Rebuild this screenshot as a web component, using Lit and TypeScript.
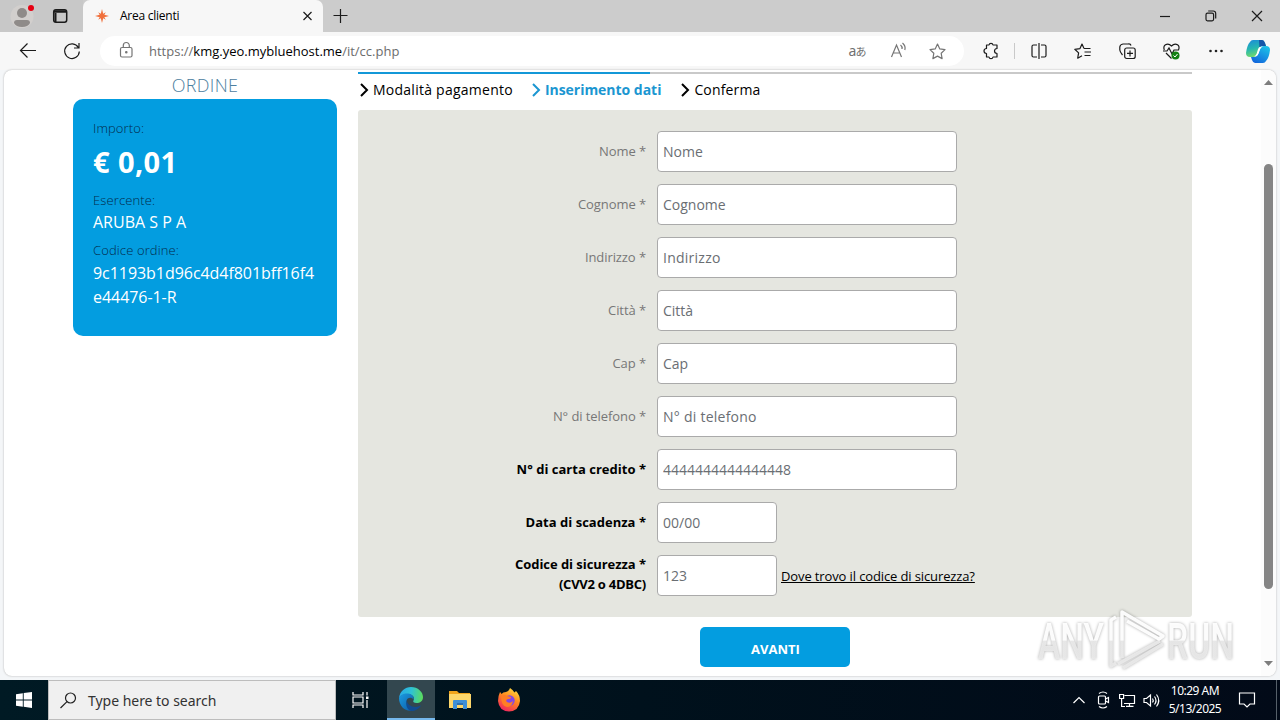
import { LitElement, html, css, svg } from "lit";
import { customElement, property } from "lit/decorators.js";

@customElement("browser-chrome")
class BrowserChrome extends LitElement {
  static styles = css`
    :host { display: block; font-family: "Open Sans", "Noto Sans", sans-serif; color: #000; }
    svg { display: block; fill: none; stroke: #1b1b1b; stroke-width: 1.2; flex: none; overflow: visible; }
    .titlebar { display: flex; height: 32px; background: #ccc; }
    .left { display: flex; width: 83px; align-items: center; background: #c8c8c8; border-radius: 0 0 5px 0; box-sizing: border-box; padding-left: 10px; gap: 15px; }
    .tab { display: flex; align-items: center; width: 240px; background: #f7f7f7; border-radius: 7px 7px 0 0; box-sizing: border-box; padding: 0 10px 0 12px; }
    .tab-title { margin-left: 11px; font-size: 12px; letter-spacing: -0.25px; flex: 1; line-height: 32px; white-space: nowrap; }
    .plus { margin: 9px 0 0 10px; }
    .controls { display: flex; margin-left: auto; align-items: center; gap: 34px; padding-right: 17px; }
    .toolbar { display: flex; height: 38px; background: #f7f7f7; align-items: center; }
    .nav { display: flex; gap: 27px; padding-left: 20px; width: 80px; box-sizing: border-box; }
    .address { display: flex; align-items: center; margin-left: 20px; width: 864px; height: 30px; border-radius: 15px; background: #fff; box-sizing: border-box; padding: 0 18px; }
    .url { margin-left: 14px; font-size: 13px; letter-spacing: 0; color: #6c6c6c; flex: 1; white-space: nowrap; }
    .host { color: #000; }
    .aa { font: 14px "Noto Sans", "Noto Sans CJK JP", sans-serif; color: #707070; width: 22px; letter-spacing: -0.8px; white-space: nowrap; margin-top: -2px; }
    .small { font-size: 11px; }
    .gray { stroke: #757575; }
    .tools { display: flex; flex: 1; align-items: center; padding: 0 10px 0 19px; gap: 27.500px; }
    .sep { width: 1px; height: 16px; background: #c9c9c9; margin: 0 -12px; flex: none; }
    .copilot { margin-left: -5px; }
  `;
  render() {
    return html`
      <div class="titlebar">
        <div class="left">
          <svg width="25" height="26" viewBox="0 0 25 26" stroke="none">
            <circle cx="12" cy="13.500" r="11.500" fill="#d2cfcd" stroke="none"/>
            <circle cx="12" cy="10" r="5" fill="#8f8b89" stroke="none"/>
            <path d="M4 20q0-3 3-3h10q3 0 3 3q-2 4-8 4t-8-4z" fill="#8f8b89" stroke="none"/>
            <circle cx="21" cy="5" r="3" fill="#e60012" stroke="none"/>
          </svg>
          <svg width="20" height="16" viewBox="0 0 20 16"><rect x="3.700" y="1.700" width="13" height="12.600" rx="2.200" stroke-width="1.500"/><path d="M4 3.500h12.500" stroke-width="2.500"/><path d="M5.500 5v9" stroke-width="2"/></svg>
        </div>
        <div class="tab">
          <svg width="14" height="14" viewBox="0 0 14 14"><path d="M7 0L8.200 4.700 10.800 3.200 9.300 5.800 14 7 9.300 8.200l1.500 2.600-2.600-1.500L7 14 5.800 9.300l-2.600 1.500 1.500-2.600L0 7l4.700-1.200-1.500-2.600 2.600 1.500z" fill="#f0703c" stroke="none"/></svg>
          <span class="tab-title">Area clienti</span>
          <svg width="11" height="10" viewBox="0 0 11 10"><path d="M1.500 1l8 8M9.500 1l-8 8"/></svg>
        </div>
        <svg class="plus" width="14" height="14" viewBox="0 0 14 14"><path d="M7.500 0v14M.5 6.500h14"/></svg>
        <div class="controls">
          <svg width="12" height="12" viewBox="0 0 12 12"><path d="M1 6.500h10"/></svg>
          <svg width="12" height="12" viewBox="0 0 12 12"><rect x="1" y="3.200" width="7.600" height="7.600" rx="1.500"/><path d="M3.200 1h5q2.500 0 2.500 2.500v5"/></svg>
          <svg width="12" height="12" viewBox="0 0 12 12"><path d="M1 1l10 10M11 1L1 11"/></svg>
        </div>
      </div>
      <div class="toolbar">
        <div class="nav">
          <svg width="16" height="16" viewBox="0 0 16 16"><path d="M16 7.500H.7M7.500 .5L.5 7.500l7 7"/></svg>
          <svg width="18" height="16" viewBox="0 0 18 16"><path d="M15.300 4.500A7.300 7.300 0 1 0 16.300 8.500M16 0v5h-5"/></svg>
        </div>
        <div class="address">
          <svg class="gray" width="17" height="16" viewBox="0 0 17 16"><rect x="2.500" y="4.500" width="11.500" height="9.500" rx="1.500"/><path d="M5.300 4.500V2.500a3 3 0 0 1 6 0v2"/><circle cx="8.300" cy="9.300" r=".7" fill="#757575"/></svg>
          <span class="url">https://<span class="host">kmg.yeo.mybluehost.me</span>/it/cc.php</span>
          <span class="aa">a<span class="small">あ</span></span>
          <svg class="gray" width="58" height="18" viewBox="0 0 58 18">
            <path d="M20.500 15L25.500 3l5 12M22.200 11h6.600M29.500 3q2 1.500 1.500 4M31.500 1q3.500 3 2.300 7"/>
          </svg>
          <svg class="gray" width="17" height="17" viewBox="0 0 17 17"><path stroke-linejoin="round" d="M8.500 1l2.300 4.900 5.200.7-3.800 3.700.9 5.300-4.600-2.500-4.600 2.500.9-5.300L1 6.600l5.200-.7z"/></svg>
        </div>
        <div class="tools">
          <svg width="16" height="16" viewBox="0 0 16 16"><path stroke-linejoin="round" d="M3.500 2H6Q6.300 .3 8 .3T10 2h4v3.500q-2.500 .3-2.500 2.500t2.500 2.500V14h-4q-.3 1.700-2 1.700T6 14H3.500v-3.500Q1 10.300 1 8t2.500-2.500z"/></svg>
          <span class="sep"></span>
          <svg width="16" height="16" viewBox="0 0 16 16"><path d="M6 2H2.500Q1 2 1 3.500v9Q1 14 2.500 14H6M10 2h3.500Q15 2 15 3.500v9q0 1.500-1.500 1.500H10M8 0v16"/></svg>
          <svg width="17" height="16" viewBox="0 0 17 16"><path stroke-linejoin="round" d="M10 5.500L8 1 6 5.600.8 6.300l3.800 3.600-.9 5.300L8 12.800M10 5.500h6.500M10.500 9H17M10.500 12.500h6"/></svg>
          <svg width="17" height="17" viewBox="0 0 17 17"><rect x="5.700" y="5" width="10.500" height="10.500" rx="2"/><path d="M11 7.500v6M8 10.300h6M3.500 12Q1 9 .8 7V4Q1 1.500 4 1h5q2.500-.5 3 1.500"/></svg>
          <svg width="17" height="17" viewBox="0 0 17 17"><path d="M1.300 7Q0 3.500 2.500 1.800 5.500 0 8.500 3 11.500 0 14.500 1.800 17 3.500 15.500 7M0 8h4l2-3 3 6 2-4h5M3 10l5.500 5.500"/><circle cx="12.500" cy="12.500" r="4" fill="#148014" stroke="none"/><path d="M10.500 12.500l1.500 1.500 2.500-3" stroke="#fff" stroke-width="1"/></svg>
          <svg width="16" height="4" viewBox="0 0 16 4"><g fill="#222" stroke="none"><circle cx="2.500" cy="2" r="1.300"/><circle cx="8" cy="2" r="1.300"/><circle cx="13.500" cy="2" r="1.300"/></g></svg>
          <svg class="copilot" width="24" height="23" viewBox="0 0 24 23">
            <defs>
              <linearGradient id="ca" x1="0" y1="0" x2=".3" y2="1"><stop stop-color="#1b88dc"/><stop offset=".55" stop-color="#26b7b0"/><stop offset="1" stop-color="#72d96b"/></linearGradient>
              <linearGradient id="cb" x1=".8" y1="0" x2=".2" y2="1"><stop stop-color="#1cc3e8"/><stop offset="1" stop-color="#1264dc"/></linearGradient>
            </defs>
            <path d="M7 0h9q2 0 3 3l1 3h-4q-2 0-3 3l-2 5q-1 3-4 3H4q-4 0-4-4Q1 5 4 2q1-2 3-2z" fill="url(#ca)" stroke="none"/>
            <path d="M13 0h3q2 0 3 3l1 3h-4q-2 0-2.500 2z" fill="#1556a8" stroke="none"/>
            <path d="M17 23H9q-2 0-3-3l-1-3h4q2 0 3-3l2-5q1-3 4-3h2q4 0 4 4-1 8-4 11-1 2-3 2z" fill="url(#cb)" stroke="none"/>
            <path d="M13.500 7h2.500q-1.300 .5-2 2.500l-1.400 4q-.7 2-2.600 2.500H8.500q1.600-.5 2.200-2.500l1.200-4Q12.500 7.500 13.500 7z" fill="#fff" stroke="none"/>
          </svg>
        </div>
      </div>`;
  }
}

@customElement("order-card")
class OrderCard extends LitElement {
  static styles = css`
    :host { display: block; width: 264px; font-family: "Open Sans", sans-serif; }
    .heading { height: 29px; line-height: 30px; text-align: center; font-size: 18px; font-weight: 300; color: #4d80a0; letter-spacing: 0.35px; }
    .card { height: 237px; background: #039de0; border-radius: 10px; box-sizing: border-box; padding: 19px 20px; }
    .key { font-size: 13px; line-height: 20px; color: #042c4c; font-weight: 300; letter-spacing: 0.12px; }
    .amount { margin: 4px 0 8px; font-size: 29px; line-height: 40px; font-weight: 700; color: #fff; letter-spacing: 0.4px; }
    .value { font-size: 16px; line-height: 24px; color: #fff; white-space: nowrap; letter-spacing: -0.05px; }
    .merchant { margin-bottom: 6px; letter-spacing: 0; }
    .code { margin-top: 1px; }
  `;
  render() {
    return html`
      <div class="heading">ORDINE</div>
      <div class="card">
        <div class="key">Importo:</div>
        <div class="amount">€ 0,01</div>
        <div class="key">Esercente:</div>
        <div class="value merchant">ARUBA S P A</div>
        <div class="key">Codice ordine:</div>
        <div class="value code">9c1193b1d96c4d4f801bff16f4<br>e44476-1-R</div>
      </div>`;
  }
}

interface Field { label: string; second?: string; hint: string; strong?: boolean; short?: boolean; wide?: boolean; link?: string; }

const FIELDS: Field[] = [
  { label: "Nome *", hint: "Nome" },
  { label: "Cognome *", hint: "Cognome" },
  { label: "Indirizzo *", hint: "Indirizzo", wide: true },
  { label: "Città *", hint: "Città" },
  { label: "Cap *", hint: "Cap" },
  { label: "N° di telefono *", hint: "N° di telefono", wide: true },
  { label: "N° di carta credito *", hint: "4444444444444448", strong: true },
  { label: "Data di scadenza *", hint: "00/00", strong: true, short: true },
  { label: "Codice di sicurezza *", second: "(CVV2 o 4DBC)", hint: "123", strong: true, short: true, link: "Dove trovo il codice di sicurezza?" },
];

@customElement("form-row")
class FormRow extends LitElement {
  @property({ attribute: false }) field!: Field;
  static styles = css`
    :host { display: flex; height: 41px; gap: 11px; align-items: center; font-family: "Open Sans", sans-serif; }
    .label { width: 288px; text-align: right; font-size: 13px; line-height: 20px; color: #777; white-space: nowrap; letter-spacing: -0.08px; margin-top: -2px; }
    .strong { color: #000; font-weight: 700; letter-spacing: 0.02px; }
    .two { margin-top: -3px; letter-spacing: -0.05px; }
    .second { letter-spacing: -0.25px; }
    input { width: 300px; height: 41px; box-sizing: border-box; border: 1px solid #aaa; border-radius: 4px; background: #fff; padding: 0 5px; margin: 0; font: 14px "Open Sans", sans-serif; outline: none; }
    input::placeholder { color: #6a6e73; opacity: 1; }
    .short { width: 120px; }
    .wide { letter-spacing: 0.25px; }
    .link { margin-left: -7px; font-size: 13px; letter-spacing: -0.12px; color: #000; text-decoration: underline; white-space: nowrap; }
  `;
  render() {
    const f = this.field;
    return html`
      <div class="label ${f.strong ? "strong" : ""} ${f.second ? "two" : ""}">${f.label}${f.second ? html`<br><span class="second">${f.second}</span>` : ""}</div>
      <input class="${f.short ? "short" : ""} ${f.wide ? "wide" : ""}" placeholder=${f.hint}>
      ${f.link ? html`<a class="link">${f.link}</a>` : ""}`;
  }
}

@customElement("payment-form")
class PaymentForm extends LitElement {
  static styles = css`
    :host { display: block; width: 834px; font-family: "Open Sans", sans-serif; padding-top: 2px; }
    .progress { height: 2px; background: #c9c9c9; }
    .done { width: 292px; height: 2px; background: #1398d8; }
    .steps { display: flex; height: 36px; box-sizing: border-box; padding: 0 0 5px 1px; font-size: 14px; align-items: center; }
    .step { display: flex; align-items: center; gap: 4px; color: #000; white-space: nowrap; margin-right: 19px; }
    .first { letter-spacing: 0.25px; margin-right: 18px; }
    .last { letter-spacing: 0.15px; }
    .step svg { display: block; fill: none; stroke: currentColor; stroke-width: 2; }
    .current { color: #1b96d1; font-weight: 700; letter-spacing: -0.03px; }
    .panel { background: #e5e6e0; border-radius: 3px; height: 507px; box-sizing: border-box; padding-top: 21px; display: flex; flex-direction: column; gap: 12px; }
    .button { display: block; width: 150px; height: 40px; margin: 10px auto 0 342px; border: 0; border-radius: 5px; background: #039de0; color: #fff; font: 700 13px "Open Sans", sans-serif; padding: 4px 0 0 1px; }
  `;
  chevron = html`<svg width="10" height="14" viewBox="0 0 10 14"><path d="M2 1l6 6-6 6"/></svg>`;
  render() {
    return html`
      <div class="progress"><div class="done"></div></div>
      <div class="steps">
        <span class="step first">${this.chevron}<span>Modalità pagamento</span></span>
        <span class="step current">${this.chevron}<span>Inserimento dati</span></span>
        <span class="step last">${this.chevron}<span>Conferma</span></span>
      </div>
      <div class="panel">${FIELDS.map((f) => html`<form-row .field=${f}></form-row>`)}</div>
      <button class="button">AVANTI</button>`;
  }
}

@customElement("task-bar")
class TaskBar extends LitElement {
  static styles = css`
    :host { display: flex; height: 40px; background: linear-gradient(90deg, #001a24, #00111c 50%, #020a18); font-family: "Noto Sans", "Open Sans", sans-serif; }
    svg { display: block; fill: none; stroke: #fff; stroke-width: 1.200; flex: none; overflow: visible; }
    .start { width: 48px; display: grid; place-items: center; }
    .search { width: 288px; box-sizing: border-box; background: #f0f0f0; border: 1px solid #bdbdbd; display: flex; align-items: center; padding-left: 11px; color: #333; }
    .search svg { stroke: #222; }
    .hint { margin-left: 11px; font-size: 14px; letter-spacing: -0.03px; }
    .app { width: 48px; height: 40px; display: grid; place-items: center; box-sizing: border-box; }
    .app + .app { margin-left: 1px; }
    .app + .active { margin-left: 3px; }
    .active { background: #33474f; border-bottom: 2px solid #76b9ed; }
    .tray { display: flex; margin-left: auto; align-items: center; gap: 8px; color: #fff; }
    .up { margin-right: 2px; }
    .clock { width: 60px; font-size: 12px; line-height: 18px; text-align: center; letter-spacing: -0.5px; white-space: nowrap; margin-left: -3px; }
    .note { margin: 0 13px 0 6px; }
    .edge { width: 1px; height: 40px; background: #56606a; margin-right: 3px; }
  `;
  render() {
    return html`
      <div class="start"><svg width="16" height="16" viewBox="0 0 16 16"><path d="M0 2.300L6.800 1.300v6.200H0zM7.700 1.100L16 0v7.500H7.700zM0 8.400h6.800v6.300L0 13.700zM7.700 8.400H16V16l-8.300-1.200z" fill="#fff" stroke="none"/></svg></div>
      <div class="search"><svg width="17" height="17" viewBox="0 0 17 17"><circle cx="10.500" cy="6" r="5"/><path d="M7 9.600L.5 16"/></svg><span class="hint">Type here to search</span></div>
      <div class="app"><svg width="17" height="16" viewBox="0 0 17 16"><path d="M1 0v3h10V0M1 5h10v6H1zM1 16v-3h10v3M15 0v3.500M15 8v8"/><rect x="14" y="4.500" width="2.500" height="2.500" fill="#fff" stroke="none"/></svg></div>
      <div class="app active"><svg width="24" height="24" viewBox="0 0 24 24">
        <defs>
          <linearGradient id="ea" x1="0" y1=".4" x2="1" y2=".5"><stop stop-color="#28a9e8"/><stop offset=".5" stop-color="#2fc2d4"/><stop offset="1" stop-color="#5bdc5c"/></linearGradient>
          <linearGradient id="eb" x1="0" y1="0" x2="1" y2="1"><stop stop-color="#1b9ce2"/><stop offset="1" stop-color="#0c59a4"/></linearGradient>
        </defs>
        <g stroke="none">
          <path d="M0 11C1 4 6 0 12 0c7 0 12 5 12 10 0 4-3 6-6.500 6-2.500 0-4-1-3-2.500C16 11 14 7 9 7 4 7 1 9 0 11z" fill="url(#ea)"/>
          <path d="M0 11c1-3 5-5 9-4.500 4 .5 6.500 3.500 5.500 6C13 10 8 10 7.500 14c-.5 5 4 9 8 9-8 3-15.500-3-15.500-12z" fill="url(#eb)"/>
          <path d="M8 13c-.5 4 4 7 8.500 7 2.500 0 4.500-1.500 5.500-1.500C20 22 16 24 12.500 24 8 23 6 17 8 13z" fill="#124b90"/>
        </g></svg></div>
      <div class="app"><svg width="22" height="20" viewBox="0 0 22 20"><g stroke="none"><path d="M0 1h8l2 2h11v15H0z" fill="#f0a41c"/><path d="M0 4h22v14H0z" fill="#fcd66b"/><path d="M4 19v-8q0-1 1-1h12q1 0 1 1v8h-4v-4H8v4z" fill="#3d8fd8"/><path d="M8 13h6v2H8z" fill="#2e6fae"/></g></svg></div>
      <div class="app"><svg width="24" height="24" viewBox="0 0 24 24">
        <defs><linearGradient id="fa" x1=".8" y1="0" x2=".3" y2="1"><stop stop-color="#ffe042"/><stop offset=".45" stop-color="#ff8a1f"/><stop offset="1" stop-color="#f0245f"/></linearGradient></defs>
        <g stroke="none"><path d="M3 4q1 1 1.500 2Q6 4 9 4q3-1 4-4 3 2 4.500 4.500L19 3q4 4 4 10-1 10-11 10.500Q2 23 1 13 1 8 3 4z" fill="url(#fa)"/><circle cx="12.500" cy="12.500" r="5.200" fill="#8347e5"/><path d="M4 8q4-2 6 0l4 1q0 2-3 2-3 1-1 3 3 2 6-1-1 6-6 6-6-1-6-11z" fill="#ff7e24"/></g></svg></div>
      <div class="tray">
        <svg class="up" width="12" height="8" viewBox="0 0 12 8"><path d="M.5 7L6 1.500 11.500 7"/></svg>
        <svg width="16" height="18" viewBox="0 0 16 18"><rect x="3.500" y="5" width="7" height="8" rx="1"/><path d="M10.500 8l3-1.500v5l-3-1.500M4 2.500q4-3 8 0M4 15.500q4 3 8 0"/></svg>
        <svg width="16" height="15" viewBox="0 0 16 15"><path d="M5.500 2.500h10v8H5M10.500 10.500V13M7 13.300h7.500M.6 1.500h4v4h-4zM2.600 5.500v8H6"/></svg>
        <svg width="17" height="15" viewBox="0 0 17 15"><path d="M1 5.500h2.500L7.500 2v11l-4-3.500H1zM9.500 5.500q1.500 2 0 4M11.500 3.500q3 4 0 8M13.500 1.500q4.500 6 0 12"/></svg>
        <div class="clock">10:29 AM<br>5/13/2025</div>
        <svg class="note" width="16" height="16" viewBox="0 0 16 16"><path d="M.5 1h15v11H11l-3 3-3-3H.5z"/></svg>
        <span class="edge"></span>
      </div>`;
  }
}

@customElement("brand-mark")
class BrandMark extends LitElement {
  static styles = css`
    :host { display: block; }
    svg { display: block; filter: drop-shadow(0 0 1.500px rgba(0, 0, 0, 0.35)); }
    .word { font-family: Roboto, sans-serif; font-size: 50px; font-weight: 500; }
  `;
  render() {
    return html`<svg width="240" height="66" viewBox="0 0 240 66">
      <defs><linearGradient id="wm" x1="0" y1="0" x2="0" y2="64" gradientUnits="userSpaceOnUse"><stop offset=".5" stop-color="#fff" stop-opacity=".95"/><stop offset=".52" stop-color="#ebebeb" stop-opacity=".9"/></linearGradient></defs>
      ${svg`<g fill="url(#wm)">
        <text class="word" x="2" y="51" textLength="66" lengthAdjust="spacingAndGlyphs">ANY</text>
        <text class="word" x="131" y="51" textLength="67" lengthAdjust="spacingAndGlyphs">RUN</text>
      </g>
      <path d="M80 9l-5 3v46l5-3M86 50V4l41 24-4 3-32-18M124 33L82 56M127 36L87 60" fill="none" stroke="url(#wm)" stroke-width="3.500" stroke-linejoin="round"/>`}
    </svg>`;
  }
}

@customElement("app-root")
class AppRoot extends LitElement {
  static styles = css`
    :host { display: flex; flex-direction: column; position: relative; width: 1280px; height: 720px; overflow: hidden; background: #f4f6f8; }
    .page { display: flex; height: 606px; margin: 0 4px 4px; background: #fff; border-radius: 8px; box-shadow: 0 0 2px #aaa; box-sizing: border-box; padding-left: 69px; overflow: hidden; }
    .form { margin-left: 21px; }
    .scroll { display: flex; flex-direction: column; align-items: center; margin-left: auto; width: 15px; background: #fcfcfc; box-sizing: border-box; padding: 10px 0 10px; }
    .arrow { display: block; fill: #7d7d7d; }
    .thumb { width: 9px; height: 425px; border-radius: 5px; background: #858585; margin: 79px 0 auto; }
    .mark { position: absolute; left: 1036px; top: 608px; }
  `;
  render() {
    return html`
      <browser-chrome></browser-chrome>
      <main class="page">
        <order-card></order-card>
        <payment-form class="form"></payment-form>
        <div class="scroll">
          <svg class="arrow" width="9" height="5" viewBox="0 0 9 5"><path d="M0 5l4.500-5L9 5z"/></svg>
          <div class="thumb"></div>
          <svg class="arrow" width="9" height="5" viewBox="0 0 9 5"><path d="M0 0l4.500 5L9 0z"/></svg>
        </div>
      </main>
      <task-bar></task-bar>
      <brand-mark class="mark"></brand-mark>`;
  }
}
